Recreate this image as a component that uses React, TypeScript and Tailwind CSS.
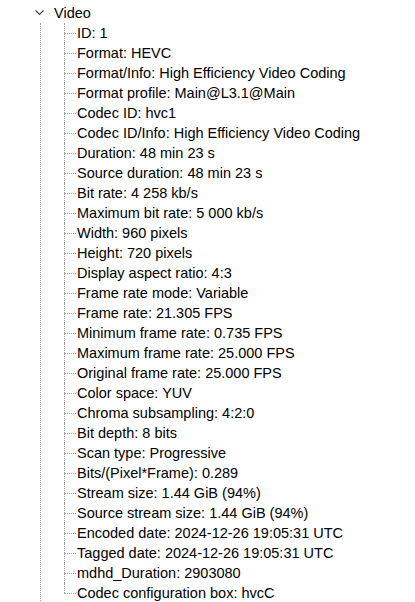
import React from "react";

const items = [
  "ID: 1",
  "Format: HEVC",
  "Format/Info: High Efficiency Video Coding",
  "Format profile: Main@L3.1@Main",
  "Codec ID: hvc1",
  "Codec ID/Info: High Efficiency Video Coding",
  "Duration: 48 min 23 s",
  "Source duration: 48 min 23 s",
  "Bit rate: 4 258 kb/s",
  "Maximum bit rate: 5 000 kb/s",
  "Width: 960 pixels",
  "Height: 720 pixels",
  "Display aspect ratio: 4:3",
  "Frame rate mode: Variable",
  "Frame rate: 21.305 FPS",
  "Minimum frame rate: 0.735 FPS",
  "Maximum frame rate: 25.000 FPS",
  "Original frame rate: 25.000 FPS",
  "Color space: YUV",
  "Chroma subsampling: 4:2:0",
  "Bit depth: 8 bits",
  "Scan type: Progressive",
  "Bits/(Pixel*Frame): 0.289",
  "Stream size: 1.44 GiB (94%)",
  "Source stream size: 1.44 GiB (94%)",
  "Encoded date: 2024-12-26 19:05:31 UTC",
  "Tagged date: 2024-12-26 19:05:31 UTC",
  "mdhd_Duration: 2903080",
  "Codec configuration box: hvcC",
];

export default function App() {
  return (
    <div
      className="w-[415px] h-[602px] overflow-hidden bg-white pt-[3px] text-[14.5px] text-black"
      style={{ fontFamily: '"Liberation Sans", Arial, sans-serif' }}
    >
      <div className="flex h-[20px] items-center">
        <div className="w-[35px]" />
        <svg width="9" height="6" viewBox="0 0 9 6" className="mt-[-1px]">
          <path d="M0.5 0.5 L4.5 4.5 L8.5 0.5" fill="none" stroke="#444" strokeWidth="1.1" />
        </svg>
        <div className="w-[5px]" />
        <div className="w-[1px] h-[1px] bg-[#a0a0a0]" />
        <div className="w-[4px]" />
        <span className="leading-[20px]">Video</span>
      </div>
      <div className="ml-[40px] border-l border-dotted border-[#a0a0a0] pl-[23px]">
        {items.map((t, i) => {
          const last = i === items.length - 1;
          return (
            <div key={i} className="flex h-[20px]">
              <div className="flex w-[13px] flex-col">
                <div className="h-[10px] border-l border-dotted border-[#a0a0a0]" />
                <div
                  className={
                    last
                      ? "flex-1 border-t border-dotted border-[#a0a0a0] mr-[1px]"
                      : "flex-1 border-l border-t border-dotted border-[#a0a0a0] mr-[1px]"
                  }
                />
              </div>
              <span className="whitespace-nowrap leading-[20px]">{t}</span>
            </div>
          );
        })}
      </div>
    </div>
  );
}
